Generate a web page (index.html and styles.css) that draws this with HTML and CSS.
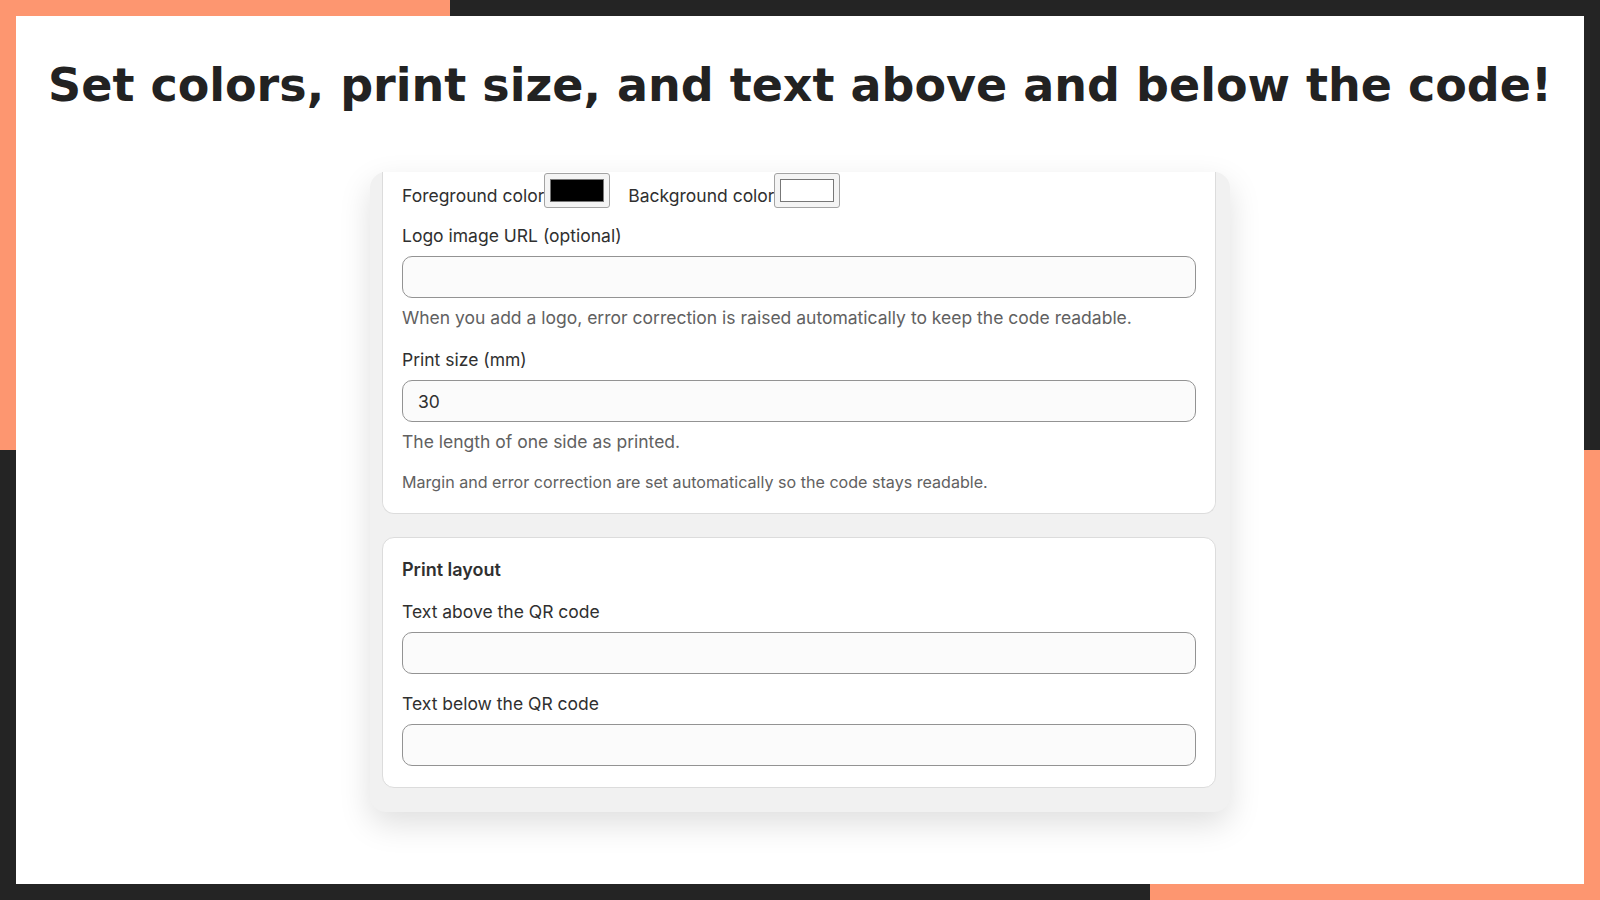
FILE: index.html
```html
<!DOCTYPE html>
<html lang="en">
<head>
  <meta charset="UTF-8">
  <meta name="viewport" content="width=device-width, initial-scale=1.0">
  <title>QR code print settings</title>
  <link rel="stylesheet" href="styles.css">
</head>
<body>
  <div class="frame">
    <div class="page">
      <h1>Set colors, print size, and text above and below the code!</h1>
      <div class="panel">
        <div class="card card-top">
          <div class="color-row">
            <label class="color-field">Foreground color<input type="color" value="#000000"></label>
            <label class="color-field">Background color<input type="color" value="#ffffff"></label>
          </div>
          <div class="form-group">
            <label for="logo_url">Logo image URL (optional)</label>
            <input type="text" id="logo_url">
            <p class="hint">When you add a logo, error correction is raised automatically to keep the code readable.</p>
          </div>
          <div class="form-group">
            <label for="print_size">Print size (mm)</label>
            <input type="text" id="print_size" value="30">
            <p class="hint">The length of one side as printed.</p>
          </div>
          <p class="note">Margin and error correction are set automatically so the code stays readable.</p>
        </div>
        <div class="card">
          <h2>Print layout</h2>
          <div class="form-group">
            <label for="text_above">Text above the QR code</label>
            <input type="text" id="text_above">
          </div>
          <div class="form-group last">
            <label for="text_below">Text below the QR code</label>
            <input type="text" id="text_below">
          </div>
        </div>
      </div>
    </div>
  </div>
</body>
</html>
```

FILE: styles.css
```css
body {
  margin: 0;
  background-color: #242424;
}

/* dark frame with orange corners top-left and bottom-right */
.frame {
  width: 1600px;
  height: 900px;
  padding: 16px;
  box-sizing: border-box;
  background:
    linear-gradient(#fd9670, #fd9670) top left / 450px 450px no-repeat,
    linear-gradient(#fd9670, #fd9670) bottom right / 450px 450px no-repeat,
    #242424;
}

.page {
  height: 100%;
  background: white;
  display: flex;
  flex-direction: column;
  align-items: center;
}

h1 {
  font-family: 'DejaVu Sans', sans-serif;
  font-size: 46px;
  font-weight: bold;
  color: #222;
  margin: 41px 0 0;
  line-height: 56px;
}

.panel {
  width: 860px;
  box-sizing: border-box;
  margin-top: 59px;
  padding: 0 14px 24px 12px;
  background-color: #f1f1f1;
  border-radius: 16px;
  box-shadow: 0 12px 32px rgba(0, 0, 0, 0.13);
  font-family: 'Inter', 'Noto Sans', sans-serif;
  color: #303030;
}

.card {
  background: white;
  border: 1px solid #dcdcdc;
  border-radius: 12px;
  padding: 20px 19px 20px;
  margin-top: 23px;
}

.card-top {
  margin-top: 0;
  border-top: none;
  border-radius: 0 0 12px 12px;
  padding-top: 1px;
}

.color-row {
  display: flex;
  gap: 18px;
  margin-bottom: 16px;
}

.color-field {
  display: flex;
  align-items: flex-end;
  font-size: 17.5px;
  line-height: 24px;
}

.color-field input {
  -webkit-appearance: none;
  appearance: none;
  width: 66px;
  height: 35px;
  padding: 5px;
  margin: 0;
  border: 1px solid #a3a3a3;
  border-radius: 3px;
  background-color: #f4f4f4;
  box-sizing: border-box;
}

.color-field input::-webkit-color-swatch-wrapper {
  padding: 0;
}

.color-field input::-webkit-color-swatch {
  border: 1px solid #777;
  border-radius: 0;
}

.form-group {
  margin-bottom: 18px;
}

.form-group.last {
  margin-bottom: 1px;
}

.form-group label {
  display: block;
  font-size: 17.5px;
  line-height: 24px;
  margin-bottom: 8px;
}

input[type="text"] {
  display: block;
  width: 100%;
  height: 42px;
  box-sizing: border-box;
  padding: 0 15px;
  border: 1px solid #939393;
  border-radius: 10px;
  background-color: #fbfbfb;
  font-family: 'Inter', 'Noto Sans', sans-serif;
  font-size: 17.5px;
  color: #303030;
}

.hint {
  margin: 8px 0 0;
  font-size: 17.5px;
  line-height: 24px;
  color: #616161;
}

.note {
  margin: -1px 0 0;
  font-size: 16.1px;
  line-height: 22px;
  color: #616161;
}

h2 {
  font-size: 18px;
  font-weight: 600;
  line-height: 24px;
  margin: 0 0 18px;
}
```
